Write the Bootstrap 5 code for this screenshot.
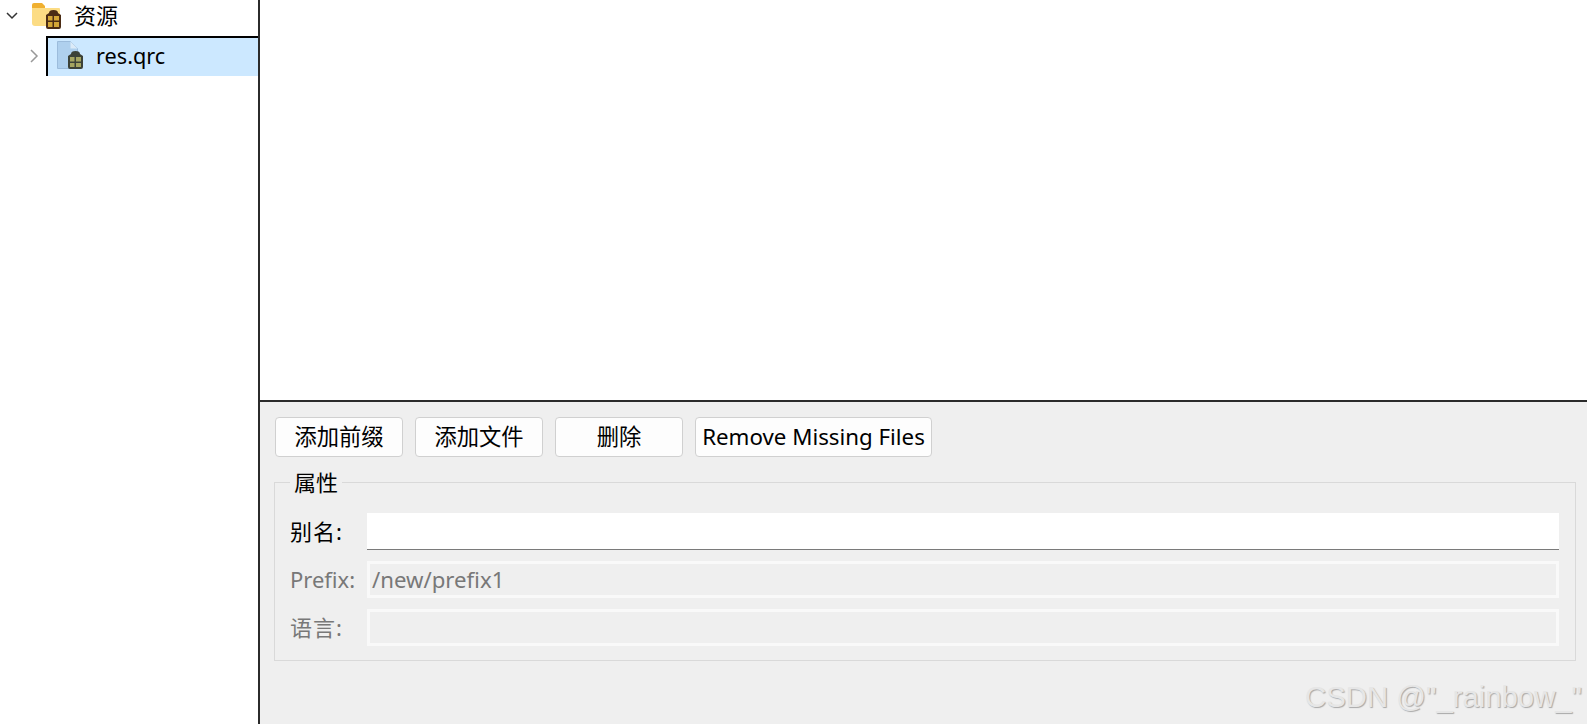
<!DOCTYPE html>
<html lang="zh-CN">
<head>
    <meta charset="UTF-8">
    <title>资源</title>
    <link href="https://cdn.jsdelivr.net/npm/bootstrap@5.3.0/dist/css/bootstrap.min.css" rel="stylesheet">
    <style>
        html, body {
            height: 100%;
            overflow: hidden;
        }
        body {
            font-family: "Noto Sans", "Noto Sans CJK SC", sans-serif;
            font-size: 22px;
            line-height: 1;
            color: #000;
            background: #fff;
        }
        .tree-pane {
            width: 260px;
            border-right: 2px solid #2b2b2b;
        }
        .tree-root {
            height: 36px;
            padding-bottom: 5px;
        }
        .tree-root span {
            margin-bottom: 2px;
        }
        .tree-arrow {
            width: 22px;
            margin-left: 1px;
        }
        .tree-folder {
            margin: 0 12px 0 9px;
        }
        .tree-child {
            height: 40px;
        }
        .tree-child .tree-arrow {
            margin-left: 23px;
            margin-right: 1px;
        }
        .tree-selected {
            height: 40px;
            background: #cce8ff;
            border-left: 2px solid #000;
            border-top: 2px solid #000;
            padding: 0 0 2px 9px;
            font-size: 21.7px;
        }
        .tree-selected svg {
            margin-right: 11px;
        }
        .editor-blank {
            height: 402px;
            border-bottom: 2px solid #2b2b2b;
        }
        .props-panel {
            background: #efefef;
            padding: 15px 11px 0 15px;
        }
        .tool-btn {
            height: 40px;
            width: 128px;
            padding: 0;
            font-size: 22.3px;
            line-height: 1;
            color: #000;
            background: #fdfdfd;
            border: 1px solid #d0d0d0;
            border-radius: 4px;
        }
        .tool-btn-wide {
            width: 237px;
        }
        .tool-row {
            gap: 12px;
        }
        .props-box {
            margin: 25px 0 0 -1px;
            height: 179px;
            border: 1px solid #d9d9d9;
            padding: 30px 16px 0 15px;
        }
        .props-title {
            top: -12px;
            left: 15px;
            padding: 0 4px;
            background: #efefef;
        }
        .prop-row {
            height: 37px;
            margin-bottom: 11px;
        }
        .prop-label {
            width: 77px;
            flex-shrink: 0;
            margin-bottom: 2px;
        }
        .prop-wide {
            letter-spacing: 1px;
        }
        .prop-muted {
            color: #787878;
        }
        .prop-input {
            height: 100%;
            background: #fff;
            border-bottom: 1px solid #7a7a7a;
        }
        .prop-off {
            height: 100%;
            background: #efefef;
            border: 3px solid #f9f9f9;
            padding: 1px 0 0 2px;
            font-size: 22.2px;
            color: #787878;
        }
        .mark-text {
            right: 5px;
            bottom: 13px;
            font-family: "Liberation Sans", sans-serif;
            font-size: 29.3px;
            color: #e6e6e6;
            text-shadow: 1px 1px 1px #a8a8a8;
            white-space: nowrap;
        }
    </style>
</head>
<body>

<div class="d-flex h-100 position-relative">
    <!-- resource tree -->
    <div class="tree-pane flex-shrink-0">
        <div class="tree-root d-flex align-items-center">
            <svg class="tree-arrow" height="12" viewBox="0 0 14 12"><path d="M2 3l5 5 5-5" fill="none" stroke="#333" stroke-width="1.5"/></svg>
            <svg class="tree-folder" width="30" height="30" viewBox="0 0 30 30">
                <path d="M0 4q0-2 2-2h8l3 3v2H0z" fill="#f0b030"/>
                <path d="M0 7h27q1 0 1 1v16q0 1-1 1H3q-3 0-3-3z" fill="#fcdc84"/>
                <path d="M17 12q0-3 4.500-3t4.500 3l3 2v12q0 2-2 2H16q-2 0-2-2V14z" fill="#4b2c14"/>
                <path d="M16 15h4.500v4.500H16zM22 15h5v4.500h-5zM16 21h4.500v5H16zM22 21h5v5h-5z" fill="#d4a636"/>
            </svg>
            <span>资源</span>
        </div>
        <div class="tree-child d-flex">
            <svg class="tree-arrow align-self-center" height="16" viewBox="0 0 14 16"><path d="M4 2l6 6-6 6" fill="none" stroke="#999" stroke-width="1.5"/></svg>
            <div class="tree-selected flex-grow-1 d-flex align-items-center">
                <svg width="28" height="30" viewBox="0 0 28 30">
                    <path d="M.5.500h13l7 7v20H.5z" fill="#afd0ee" stroke="#9cbcdc"/>
                    <path d="M13.500.5v7h7z" fill="#dcebf8"/>
                    <path d="M14 13q0-3 4.500-3t4.500 3l3 2v11q0 2-2 2H13q-2 0-2-2V15z" fill="#3c4238"/>
                    <path d="M13 16h4.500v4.500H13zM19 16h5v4.500h-5zM13 22h4.500v4H13zM19 22h5v4h-5z" fill="#a5a561"/>
                </svg>
                <span>res.qrc</span>
            </div>
        </div>
    </div>

    <!-- editor side -->
    <div class="flex-grow-1 d-flex flex-column">
        <div class="editor-blank"></div>
        <div class="props-panel flex-grow-1">
            <div class="tool-row d-flex">
                <button type="button" class="btn tool-btn">添加前缀</button>
                <button type="button" class="btn tool-btn">添加文件</button>
                <button type="button" class="btn tool-btn">删除</button>
                <button type="button" class="btn tool-btn tool-btn-wide">Remove Missing Files</button>
            </div>
            <div class="props-box position-relative">
                <span class="props-title position-absolute">属性</span>
                <div class="prop-row d-flex align-items-center">
                    <label class="prop-label prop-wide">别名:</label>
                    <div class="prop-input flex-grow-1"></div>
                </div>
                <div class="prop-row d-flex align-items-center">
                    <label class="prop-label prop-muted">Prefix:</label>
                    <div class="prop-off flex-grow-1 d-flex align-items-center">/new/prefix1</div>
                </div>
                <div class="prop-row d-flex align-items-center">
                    <label class="prop-label prop-muted prop-wide">语言:</label>
                    <div class="prop-off flex-grow-1"></div>
                </div>
            </div>
        </div>
    </div>

    <div class="mark-text position-absolute">CSDN @"_rainbow_"</div>
</div>

</body>
</html>
